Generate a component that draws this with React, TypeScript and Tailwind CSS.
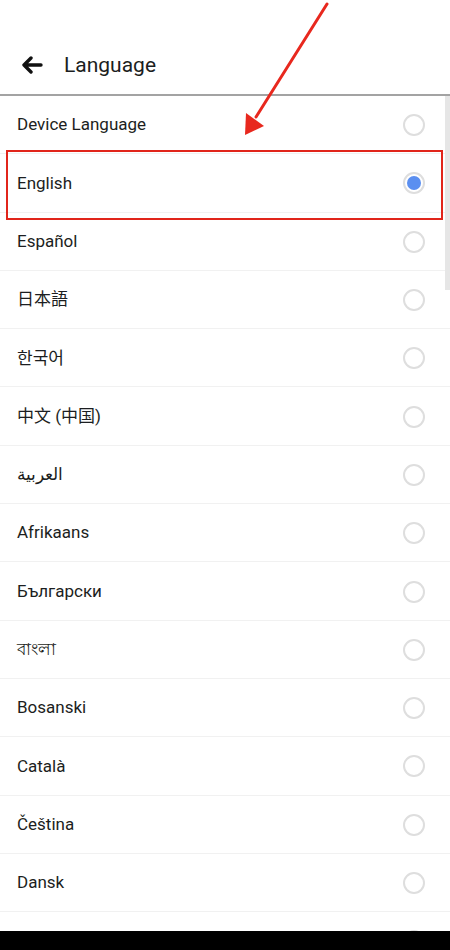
import React from "react";

const languages = [
  "Device Language",
  "English",
  "Español",
  "日本語",
  "한국어",
  "中文 (中国)",
  "العربية",
  "Afrikaans",
  "Български",
  "বাংলা",
  "Bosanski",
  "Català",
  "Čeština",
  "Dansk",
];

const Radio: React.FC<{ checked: boolean }> = ({ checked }) => (
  <div className="w-[22px] h-[22px] rounded-full border-2 border-[#dedede] flex items-center justify-center">
    {checked && <div className="w-[14px] h-[14px] rounded-full bg-[#5b8ff0]" />}
  </div>
);

const App: React.FC = () => {
  return (
    <div
      className="relative w-[450px] h-[950px] bg-white flex flex-col overflow-hidden text-[#1c1e21]"
      style={{ fontFamily: "Roboto, 'Noto Sans', 'Noto Sans CJK SC', sans-serif" }}
    >
      {/* header */}
      <div className="h-[96px] flex items-end pb-[15px] border-b-2 border-[#a3a3a3] shrink-0">
        <svg width="22" height="18" viewBox="0 0 22 18" className="ml-[21px] mb-[5px]">
          <path d="M10 2 L3 9 L10 16 M3 9 H20" fill="none" stroke="#111" strokeWidth="3.4" strokeLinecap="round" strokeLinejoin="round" />
        </svg>
        <h1 className="ml-[21px] text-[21px] leading-[28px]">Language</h1>
      </div>

      {/* list */}
      <div className="relative flex-1 overflow-hidden">
        {languages.map((lang, i) => (
          <div
            key={lang}
            className="h-[58.3px] flex items-center justify-between pl-[17px] pr-[25px] pt-[1px] border-b border-[#f1f1f1]"
          >
            <span className="text-[17px]">{lang}</span>
            <Radio checked={i === 1} />
          </div>
        ))}
        <div className="h-[58px] flex items-start justify-end pr-[25px] pt-[18px]">
          <Radio checked={false} />
        </div>
        {/* scrollbar */}
        <div className="absolute right-0 top-0 w-[5px] h-[194px] bg-[#e6e6e6]" />
        {/* highlight box */}
        <div className="absolute left-[6px] top-[54px] w-[437px] h-[70px] border-2 border-[#e1251b]" />
      </div>

      <div className="h-[19px] bg-black shrink-0" />

      {/* annotation arrow */}
      <svg className="absolute left-0 top-0" width="450" height="150" viewBox="0 0 450 150">
        <line x1="327" y1="4" x2="256" y2="117" stroke="#e8281e" strokeWidth="3" strokeLinecap="round" />
        <polygon points="245,135 246,113 264,126" fill="#e8281e" />
      </svg>
    </div>
  );
};

export default App;
